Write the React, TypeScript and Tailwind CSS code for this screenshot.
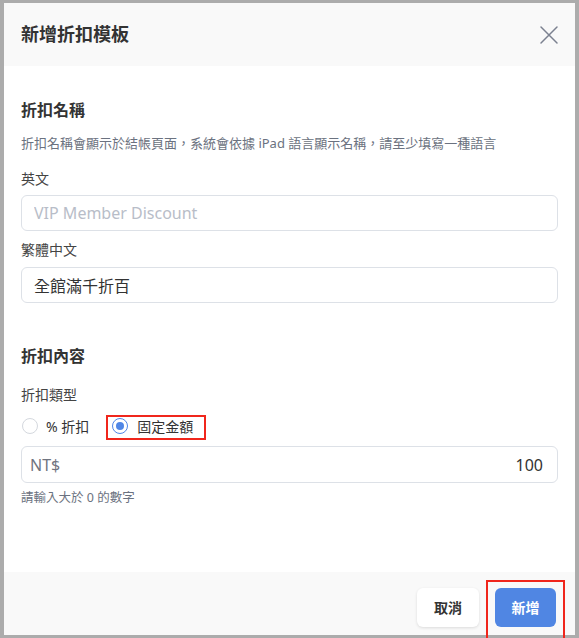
const font = { fontFamily: '"Noto Sans", "Noto Sans CJK TC", sans-serif' };

export default function App() {
  return (
    <div
      className="w-[579px] h-[638px] bg-[#acacac] pt-[3px] pb-[3px] pl-[4px] pr-[4px]"
      style={font}
    >
      <div className="relative flex flex-col h-full bg-white">
        {/* header */}
        <div className="h-[63px] shrink-0 bg-[#f9f9f9] flex items-center justify-between pl-[17px] pr-[16px]">
          <h1 className="text-[18px] font-bold text-[#333]">新增折扣模板</h1>
          <svg width="20" height="20" viewBox="0 0 20 20" className="text-[#7b8190]">
            <path d="M2 2 L18 18 M18 2 L2 18" stroke="currentColor" strokeWidth="1.5" strokeLinecap="round" />
          </svg>
        </div>

        {/* body */}
        <div className="flex-1 px-[17px] pt-[32px]">
          <h2 className="text-[16px] font-bold text-[#333] leading-[24px]">折扣名稱</h2>
          <p className="mt-[12px] text-[13px] text-[#6b7280] leading-[18px]">
            折扣名稱會顯示於結帳頁面，系統會依據 iPad 語言顯示名稱，請至少填寫一種語言
          </p>

          <label className="block mt-[17px] text-[14px] text-[#444] leading-[20px]">英文</label>
          <input
            className="mt-[6px] w-full h-[36px] border border-[#dde1e7] rounded-[6px] px-[12px] text-[16px] text-[#333] placeholder:text-[#b8bdc8] outline-none"
            placeholder="VIP Member Discount"
          />

          <label className="block mt-[9px] text-[14px] text-[#444] leading-[20px]">繁體中文</label>
          <input
            className="mt-[7px] w-full h-[36px] border border-[#dde1e7] rounded-[6px] px-[12px] text-[16px] text-[#333] outline-none"
            defaultValue="全館滿千折百"
          />

          <h2 className="mt-[41px] text-[16px] font-bold text-[#333] leading-[24px]">折扣內容</h2>

          <label className="block mt-[17px] text-[14px] text-[#444] leading-[20px]">折扣類型</label>

          <div className="mt-[9px] flex items-center h-[24px]">
            <div className="flex items-center gap-[8px] pl-[1px]">
              <span className="w-[16px] h-[16px] rounded-full border border-[#d4d8de] bg-white" />
              <span className="text-[14px] text-[#333]">% 折扣</span>
            </div>
            <div className="ml-[23px] flex items-center gap-[9px]">
              <span className="w-[16px] h-[16px] rounded-full border border-[#4f86e6] bg-white flex items-center justify-center">
                <span className="w-[8px] h-[8px] rounded-full bg-[#4f86e6]" />
              </span>
              <span className="text-[14px] text-[#333]">固定金額</span>
            </div>
          </div>

          <div className="mt-[8px] w-full h-[37px] border border-[#dde1e7] rounded-[6px] px-[8px] flex items-center justify-between">
            <span className="text-[16px] text-[#707480]">NT$</span>
            <span className="text-[16px] text-[#333] pr-[6px]">100</span>
          </div>
          <p className="mt-[6px] text-[12.5px] text-[#6b7280] leading-[18px]">請輸入大於 0 的數字</p>
        </div>

        {/* footer */}
        <div className="h-[63px] shrink-0 bg-[#f9f9f9] flex justify-end items-start pt-[16px] pr-[19px] gap-[16px]">
          <button className="w-[62px] h-[39px] rounded-[6px] bg-white shadow-[0_1px_3px_rgba(0,0,0,0.12)] text-[14px] font-bold text-[#333]">
            取消
          </button>
          <button className="w-[61px] h-[39px] rounded-[6px] bg-[#5086e3] text-[14px] font-bold text-white">
            新增
          </button>
        </div>

        {/* annotation boxes */}
        <div className="absolute left-[102px] top-[412px] w-[100px] h-[25px] border-2 border-[#f0261c]" />
        <div className="absolute left-[482px] top-[577px] w-[79px] h-[60px] border-2 border-[#f0261c]" />
      </div>
    </div>
  );
}
